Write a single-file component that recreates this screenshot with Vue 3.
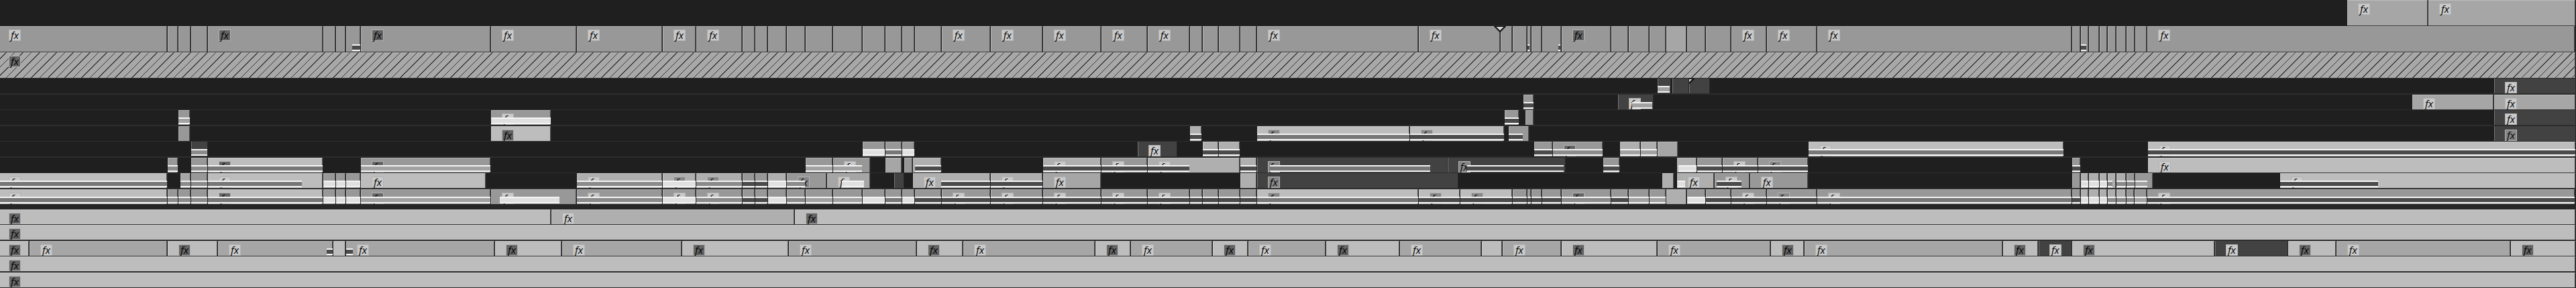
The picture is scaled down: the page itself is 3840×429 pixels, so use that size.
<template>
  <main class="timeline">
    <template v-for="track in tracks" :key="track.name">
      <div v-if="track.name === 'A1'" class="splitter"></div>
      <section class="track" :class="track.size" :aria-label="track.name">
        <div class="lane">
          <div
            v-for="clip in track.clips"
            :key="clip.start"
            class="clip"
            :class="[clip.tone, clip.marker && 'marker-' + clip.marker]"
            :style="{ marginLeft: clip.gap, width: clip.width }"
          >
            <span v-if="clip.badge" class="badge" :class="clip.badge">fx</span>
            <div
              v-if="clip.strip"
              class="strip"
              :class="clip.strip"
              :style="{ left: clip.stripLeft, width: clip.stripWidth }"
            ></div>
            <svg v-if="clip.marker" class="marker" viewBox="0 0 18 10">
              <path d="M1 0 L9 8 L17 0 Z" />
            </svg>
          </div>
        </div>
      </section>
    </template>
  </main>
</template>

<script setup>
// length of the visible part of the sequence, in frames
const TOTAL = 3840;

const pct = (frames, of) => (frames / of) * 100 + "%";

// row: [start, end, tone, badge, strip, stripStart, stripEnd, marker]
function buildClips(rows) {
  let cursor = 0;
  return rows.map(([start, end, tone, badge, strip, from, to, marker]) => {
    const length = end - start;
    const clip = {
      start,
      tone,
      badge,
      strip,
      marker,
      gap: pct(start - cursor, TOTAL),
      width: pct(length, TOTAL),
      stripLeft: pct((from || start) - start, length),
      stripWidth: pct((to || end) - (from || start), length),
    };
    cursor = end;
    return clip;
  });
}

const v11 = [
  [3499, 3620, "soft", "pale"],
  [3620, 3840, "soft", "pale"],
];

const v10 = [
  [-3, 250, "mid", "pale"],
  [250, 266, "mid"],
  [266, 285, "mid"],
  [285, 310, "mid"],
  [310, 482, "mid", "deep"],
  [482, 501, "mid"],
  [501, 516, "mid"],
  [516, 538, "mid", "", "s-dark", 525, 538],
  [538, 732, "mid", "deep"],
  [732, 860, "mid", "pale"],
  [860, 988, "mid", "pale"],
  [988, 1038, "mid", "pale"],
  [1038, 1107, "mid", "pale"],
  [1107, 1126, "mid"],
  [1126, 1145, "mid"],
  [1145, 1173, "mid"],
  [1173, 1201, "mid"],
  [1201, 1242, "mid"],
  [1242, 1286, "mid"],
  [1286, 1320, "mid"],
  [1320, 1345, "mid"],
  [1345, 1364, "mid"],
  [1364, 1404, "mid"],
  [1404, 1477, "mid", "pale"],
  [1477, 1555, "mid", "pale"],
  [1555, 1642, "mid", "pale"],
  [1642, 1711, "mid", "pale"],
  [1711, 1774, "mid", "pale"],
  [1774, 1793, "mid"],
  [1793, 1817, "mid"],
  [1817, 1849, "mid"],
  [1849, 1874, "mid"],
  [1874, 2115, "mid", "pale"],
  [2115, 2237, "mid", "pale"],
  [2237, 2255, "mid", "", "", 0, 0, "full"],
  [2255, 2277, "mid"],
  [2277, 2283, "mid", "", "s-dark", 2277, 2281],
  [2283, 2299, "mid"],
  [2299, 2328, "mid", "", "s-dark", 2324, 2327],
  [2328, 2402, "mid", "deep"],
  [2402, 2428, "mid"],
  [2428, 2459, "mid"],
  [2459, 2484, "mid"],
  [2484, 2515, "soft"],
  [2515, 2543, "mid"],
  [2543, 2581, "mid"],
  [2581, 2634, "mid", "pale"],
  [2634, 2709, "mid", "pale"],
  [2709, 3089, "mid", "pale"],
  [3089, 3102, "mid"],
  [3102, 3114, "mid", "", "s-dark", 3102, 3111],
  [3114, 3130, "mid"],
  [3130, 3142, "mid"],
  [3142, 3155, "mid"],
  [3155, 3170, "mid"],
  [3170, 3183, "mid"],
  [3183, 3202, "mid"],
  [3202, 3840, "mid", "pale"],
];

const v8 = [
  [2471, 2491, "dark", "", "s-soft", 2471, 2490],
  [2493, 2518, "dark"],
  [2518, 2549, "dark", "", "", 0, 0, "half"],
  [3718, 3840, "dark", "pale"],
];

const v7 = [
  [2271, 2287, "mid", "", "s-dark"],
  [2412, 2465, "dark", "pale", "s-soft", 2433, 2464],
  [3596, 3718, "soft", "pale"],
  [3718, 3840, "soft", "pale"],
];

const v6 = [
  [266, 284, "mid", "", "s-soft"],
  [732, 822, "mid", "pale", "s-white"],
  [2243, 2265, "mid", "", "s-dark"],
  [2274, 2287, "mid"],
  [3718, 3840, "dark", "pale"],
];

const v5 = [
  [266, 284, "mid"],
  [732, 822, "light", "deep"],
  [1774, 1792, "warm", "", "s-dark"],
  [1874, 2102, "light", "gray", "s-gray"],
  [2102, 2243, "light", "gray", "s-dark"],
  [2249, 2280, "mid", "", "s-dark", 2249, 2271],
  [3718, 3840, "dark", "gray"],
];

const v4 = [
  [285, 310, "dark", "", "s-mid"],
  [1286, 1320, "mid", "", "s-white"],
  [1320, 1345, "mid", "", "s-gray"],
  [1345, 1364, "mid", "", "s-white"],
  [1696, 1755, "dark", "pale"],
  [1793, 1817, "warm", "", "s-dark"],
  [1817, 1849, "warm", "", "s-dark"],
  [2287, 2315, "mid", "", "s-dark"],
  [2315, 2390, "mid", "deep", "s-mid"],
  [2415, 2446, "warm", "", "s-soft"],
  [2446, 2471, "warm", "", "s-soft"],
  [2471, 2502, "soft"],
  [2696, 3077, "light", "pale", "s-gray"],
  [3202, 3840, "light", "pale", "s-dark"],
];

const v3 = [
  [250, 266, "mid", "", "s-mid"],
  [285, 310, "mid", "", "s-mid"],
  [310, 482, "light", "deep", "s-gray"],
  [538, 732, "mid", "deep", "s-soft"],
  [1201, 1242, "mid", "", "s-soft"],
  [1242, 1298, "mid", "pale", "s-soft", 1242, 1286],
  [1320, 1345, "soft"],
  [1348, 1361, "mid"],
  [1361, 1404, "warm", "", "s-dark", 1364, 1404],
  [1555, 1642, "warm", "pale", "s-dark"],
  [1642, 1711, "mid", "pale", "s-dark"],
  [1711, 1849, "warm", "pale", "s-dark", 1711, 1774],
  [1849, 1874, "warm", "", "s-dark"],
  [1874, 2158, "dark", "gray", "s-gray", 1893, 2133],
  [2158, 2334, "dark", "gray", "s-dark", 2187, 2332],
  [2390, 2415, "mid", "", "s-dark"],
  [2500, 2530, "warm", "", "s-white", 2502, 2530],
  [2530, 2568, "mid", "", "s-dark"],
  [2568, 2621, "mid", "pale", "s-dark"],
  [2621, 2696, "mid", "gray", "s-dark"],
  [3089, 3102, "mid", "", "s-dark"],
  [3202, 3840, "light", "pale"],
];

const v2 = [
  [-3, 250, "light", "pale", "s-gray"],
  [269, 285, "soft", "", "s-mid"],
  [285, 310, "mid", "", "s-mid"],
  [310, 482, "light", "pale", "s-gray", 310, 451],
  [482, 501, "mid", "", "s-white"],
  [501, 516, "mid", "", "s-white"],
  [516, 538, "mid", "", "s-white"],
  [538, 725, "light", "pale"],
  [860, 988, "warm", "pale", "s-mid"],
  [988, 1038, "warm", "gray", "s-white"],
  [1038, 1107, "warm", "gray", "s-mid"],
  [1107, 1126, "mid", "", "s-dark"],
  [1126, 1145, "mid", "", "s-dark"],
  [1145, 1173, "warm", "", "s-white"],
  [1173, 1233, "mid", "gray", "s-mid", 1173, 1201],
  [1233, 1298, "soft", "pale", "s-white", 1255, 1289],
  [1333, 1348, "dark"],
  [1361, 1477, "warm", "pale", "s-dark", 1404, 1477],
  [1477, 1555, "warm", "pale", "s-dark"],
  [1555, 1642, "soft", "pale"],
  [1849, 1874, "warm"],
  [1874, 2174, "dark", "gray"],
  [2478, 2496, "warm"],
  [2500, 2556, "warm", "pale", "s-white", 2500, 2512],
  [2556, 2609, "mid", "pale", "s-dark", 2559, 2597],
  [2609, 2696, "mid", "pale"],
  [3089, 3102, "mid"],
  [3102, 3114, "warm", "", "s-white"],
  [3114, 3130, "warm", "", "s-white"],
  [3130, 3142, "warm", "", "s-white"],
  [3142, 3155, "warm", "", "s-mid", 3142, 3150],
  [3155, 3170, "warm", "", "s-mid"],
  [3170, 3183, "mid", "", "s-mid"],
  [3183, 3210, "mid", "", "s-soft", 3183, 3202],
  [3399, 3840, "light", "pale", "s-dark", 3399, 3546],
];

const v1 = [
  [-3, 250, "light", "pale", "s-gray"],
  [250, 266, "mid", "", "s-mid"],
  [266, 285, "mid", "", "s-mid"],
  [285, 310, "mid", "", "s-mid"],
  [310, 482, "light", "deep", "s-gray"],
  [482, 501, "mid", "", "s-white"],
  [501, 516, "mid", "", "s-white"],
  [516, 538, "mid", "", "s-white"],
  [538, 732, "mid", "deep", "s-soft"],
  [732, 860, "mid", "pale", "s-white", 745, 835],
  [860, 988, "mid", "pale", "s-mid"],
  [988, 1038, "mid", "pale", "s-white"],
  [1038, 1107, "mid", "pale", "s-mid"],
  [1107, 1126, "mid", "", "s-dark"],
  [1126, 1145, "mid", "", "s-dark"],
  [1145, 1173, "mid", "", "s-white"],
  [1173, 1201, "mid", "", "s-mid"],
  [1201, 1242, "mid", "", "s-soft"],
  [1242, 1286, "mid", "", "s-soft"],
  [1286, 1320, "mid", "", "s-white"],
  [1320, 1345, "mid", "", "s-gray"],
  [1345, 1364, "mid", "", "s-white"],
  [1364, 1404, "mid", "", "s-dark"],
  [1404, 1477, "mid", "pale", "s-dark"],
  [1477, 1555, "mid", "pale", "s-dark"],
  [1555, 1642, "mid", "pale", "s-dark"],
  [1642, 1711, "mid", "pale", "s-dark"],
  [1711, 1774, "mid", "pale", "s-dark"],
  [1774, 1793, "mid", "", "s-dark"],
  [1793, 1817, "mid", "", "s-dark"],
  [1817, 1849, "mid", "", "s-dark"],
  [1849, 1874, "mid", "", "s-dark"],
  [1874, 2115, "light", "gray", "s-gray"],
  [2115, 2177, "light", "gray", "s-dark"],
  [2177, 2255, "light", "gray", "s-dark"],
  [2255, 2277, "mid", "", "s-dark"],
  [2277, 2283, "mid", "", "s-dark"],
  [2283, 2299, "mid", "", "s-dark"],
  [2299, 2328, "mid", "", "s-dark"],
  [2328, 2402, "mid", "deep", "s-mid"],
  [2402, 2428, "mid", "", "s-dark"],
  [2428, 2459, "mid", "", "s-soft"],
  [2459, 2484, "mid", "", "s-soft"],
  [2484, 2515, "warm"],
  [2515, 2543, "mid", "", "s-white"],
  [2543, 2581, "mid", "", "s-dark"],
  [2581, 2634, "mid", "pale", "s-dark"],
  [2634, 2709, "mid", "gray", "s-dark"],
  [2709, 3089, "mid", "pale", "s-gray"],
  [3089, 3102, "mid", "", "s-dark"],
  [3102, 3114, "warm", "", "s-white"],
  [3114, 3130, "warm", "", "s-white"],
  [3130, 3142, "warm", "", "s-white"],
  [3142, 3155, "warm", "", "s-mid"],
  [3155, 3170, "warm", "", "s-mid"],
  [3170, 3183, "mid", "", "s-mid"],
  [3183, 3202, "mid", "", "s-soft"],
  [3202, 3840, "mid", "pale", "s-dark"],
];

const a1 = [
  [-3, 822, "light", "deep"],
  [822, 1185, "warm", "pale"],
  [1185, 3840, "light", "deep"],
];

const a3 = [
  [-3, 44, "light", "deep"],
  [44, 250, "soft", "pale"],
  [250, 325, "light", "deep"],
  [325, 497, "soft", "pale", "s-dark", 488, 497],
  [497, 516, "light"],
  [516, 738, "soft", "pale", "s-dark", 516, 526],
  [738, 838, "light", "deep"],
  [838, 1017, "soft", "pale"],
  [1017, 1176, "light", "deep"],
  [1176, 1367, "soft", "pale"],
  [1367, 1436, "light", "deep"],
  [1436, 1633, "soft", "pale"],
  [1633, 1686, "light", "deep"],
  [1686, 1808, "soft", "pale"],
  [1808, 1861, "light", "deep"],
  [1861, 1977, "soft", "pale"],
  [1977, 2087, "light", "deep"],
  [2087, 2209, "soft", "pale"],
  [2209, 2240, "light"],
  [2240, 2328, "soft", "pale"],
  [2328, 2471, "light", "deep"],
  [2471, 2640, "soft", "pale"],
  [2640, 2690, "light", "deep"],
  [2690, 2986, "soft", "pale"],
  [2986, 3039, "light", "deep"],
  [3039, 3089, "dark", "pale"],
  [3089, 3302, "light", "deep"],
  [3302, 3411, "dark", "pale"],
  [3411, 3483, "light", "deep"],
  [3483, 3743, "soft", "pale"],
  [3743, 3840, "light", "deep"],
];

const whole = (tone) => [[-3, 3840, tone, "deep"]];

const tracks = [
  { name: "V11", size: "tall", clips: buildClips(v11) },
  { name: "V10", size: "tall", clips: buildClips(v10) },
  { name: "V9", size: "tall", clips: buildClips(whole("hatch")) },
  { name: "V8", size: "roomy", clips: buildClips(v8) },
  { name: "V7", size: "", clips: buildClips(v7) },
  { name: "V6", size: "roomy", clips: buildClips(v6) },
  { name: "V5", size: "", clips: buildClips(v5) },
  { name: "V4", size: "roomy", clips: buildClips(v4) },
  { name: "V3", size: "", clips: buildClips(v3) },
  { name: "V2", size: "roomy", clips: buildClips(v2) },
  { name: "V1", size: "last", clips: buildClips(v1) },
  { name: "A1", size: "", clips: buildClips(a1) },
  { name: "A2", size: "roomy", clips: buildClips(whole("light")) },
  { name: "A3", size: "", clips: buildClips(a3) },
  { name: "A4", size: "roomy", clips: buildClips(whole("light")) },
  { name: "A5", size: "", clips: buildClips(whole("light")) },
];
</script>

<style>
body {
  margin: 0;
  background: #1f1f1f;
}
</style>

<style scoped>
.timeline {
  display: flex;
  flex-direction: column;
  overflow: hidden;
  background: #1f1f1f;
}

.track {
  padding-bottom: 1px;
  background: #2d2d2d;
}

.track.roomy {
  padding-bottom: 2px;
}

.track.last {
  padding-bottom: 0;
}

.lane {
  display: flex;
  height: 22px;
  background: #1f1f1f;
}

.tall .lane {
  height: 38px;
}

.splitter {
  height: 8px;
  background: #262626;
}

.clip {
  position: relative;
  flex: none;
  box-sizing: border-box;
  overflow: hidden;
  border-right: 1px solid #262626;
  box-shadow: inset 1px 1px 0 rgba(255, 255, 255, 0.25), inset -1px 0 0 #484848;
}

.light {
  background: #bdbdbd;
}

.warm {
  background: #afafaf;
}

.soft {
  background: #a6a6a6;
}

.mid {
  background: #989898;
}

.dark {
  background: #424242;
  box-shadow: inset 1px 0 0 #777;
}

.hatch {
  background: repeating-linear-gradient(135deg, #a8a8a8 0 22%, #3c3c3c 22% 25%) 1px 0 / 25px 25px;
}

.badge {
  position: absolute;
  top: 5px;
  left: 16px;
  box-sizing: border-box;
  width: 18px;
  height: 17px;
  border: 1px solid #b2b2b2;
  color: #000;
  font: italic 15px/15px "Open Sans", "Noto Sans", sans-serif;
  text-align: center;
}

.badge.pale {
  background: #cacaca;
}

.badge.gray {
  background: #868686;
}

.badge.deep {
  background: #646464;
}

.strip {
  position: absolute;
  bottom: 1px;
  box-sizing: border-box;
  height: 10px;
  border: solid #f4f4f4;
  border-width: 2px 0;
}

.s-dark {
  background: #4b4b4b;
}

.s-gray {
  background: #777;
}

.s-mid {
  background: #8b8b8b;
}

.s-soft {
  background: #a2a2a2;
}

.s-white {
  background: #e0e0e0;
}

.marker {
  position: absolute;
  top: 0;
  left: -10px;
  width: 18px;
  height: 10px;
  fill: #d4d4d4;
  stroke: #111;
  stroke-width: 2;
}

.marker-full {
  z-index: 1;
  overflow: visible;
}
</style>
